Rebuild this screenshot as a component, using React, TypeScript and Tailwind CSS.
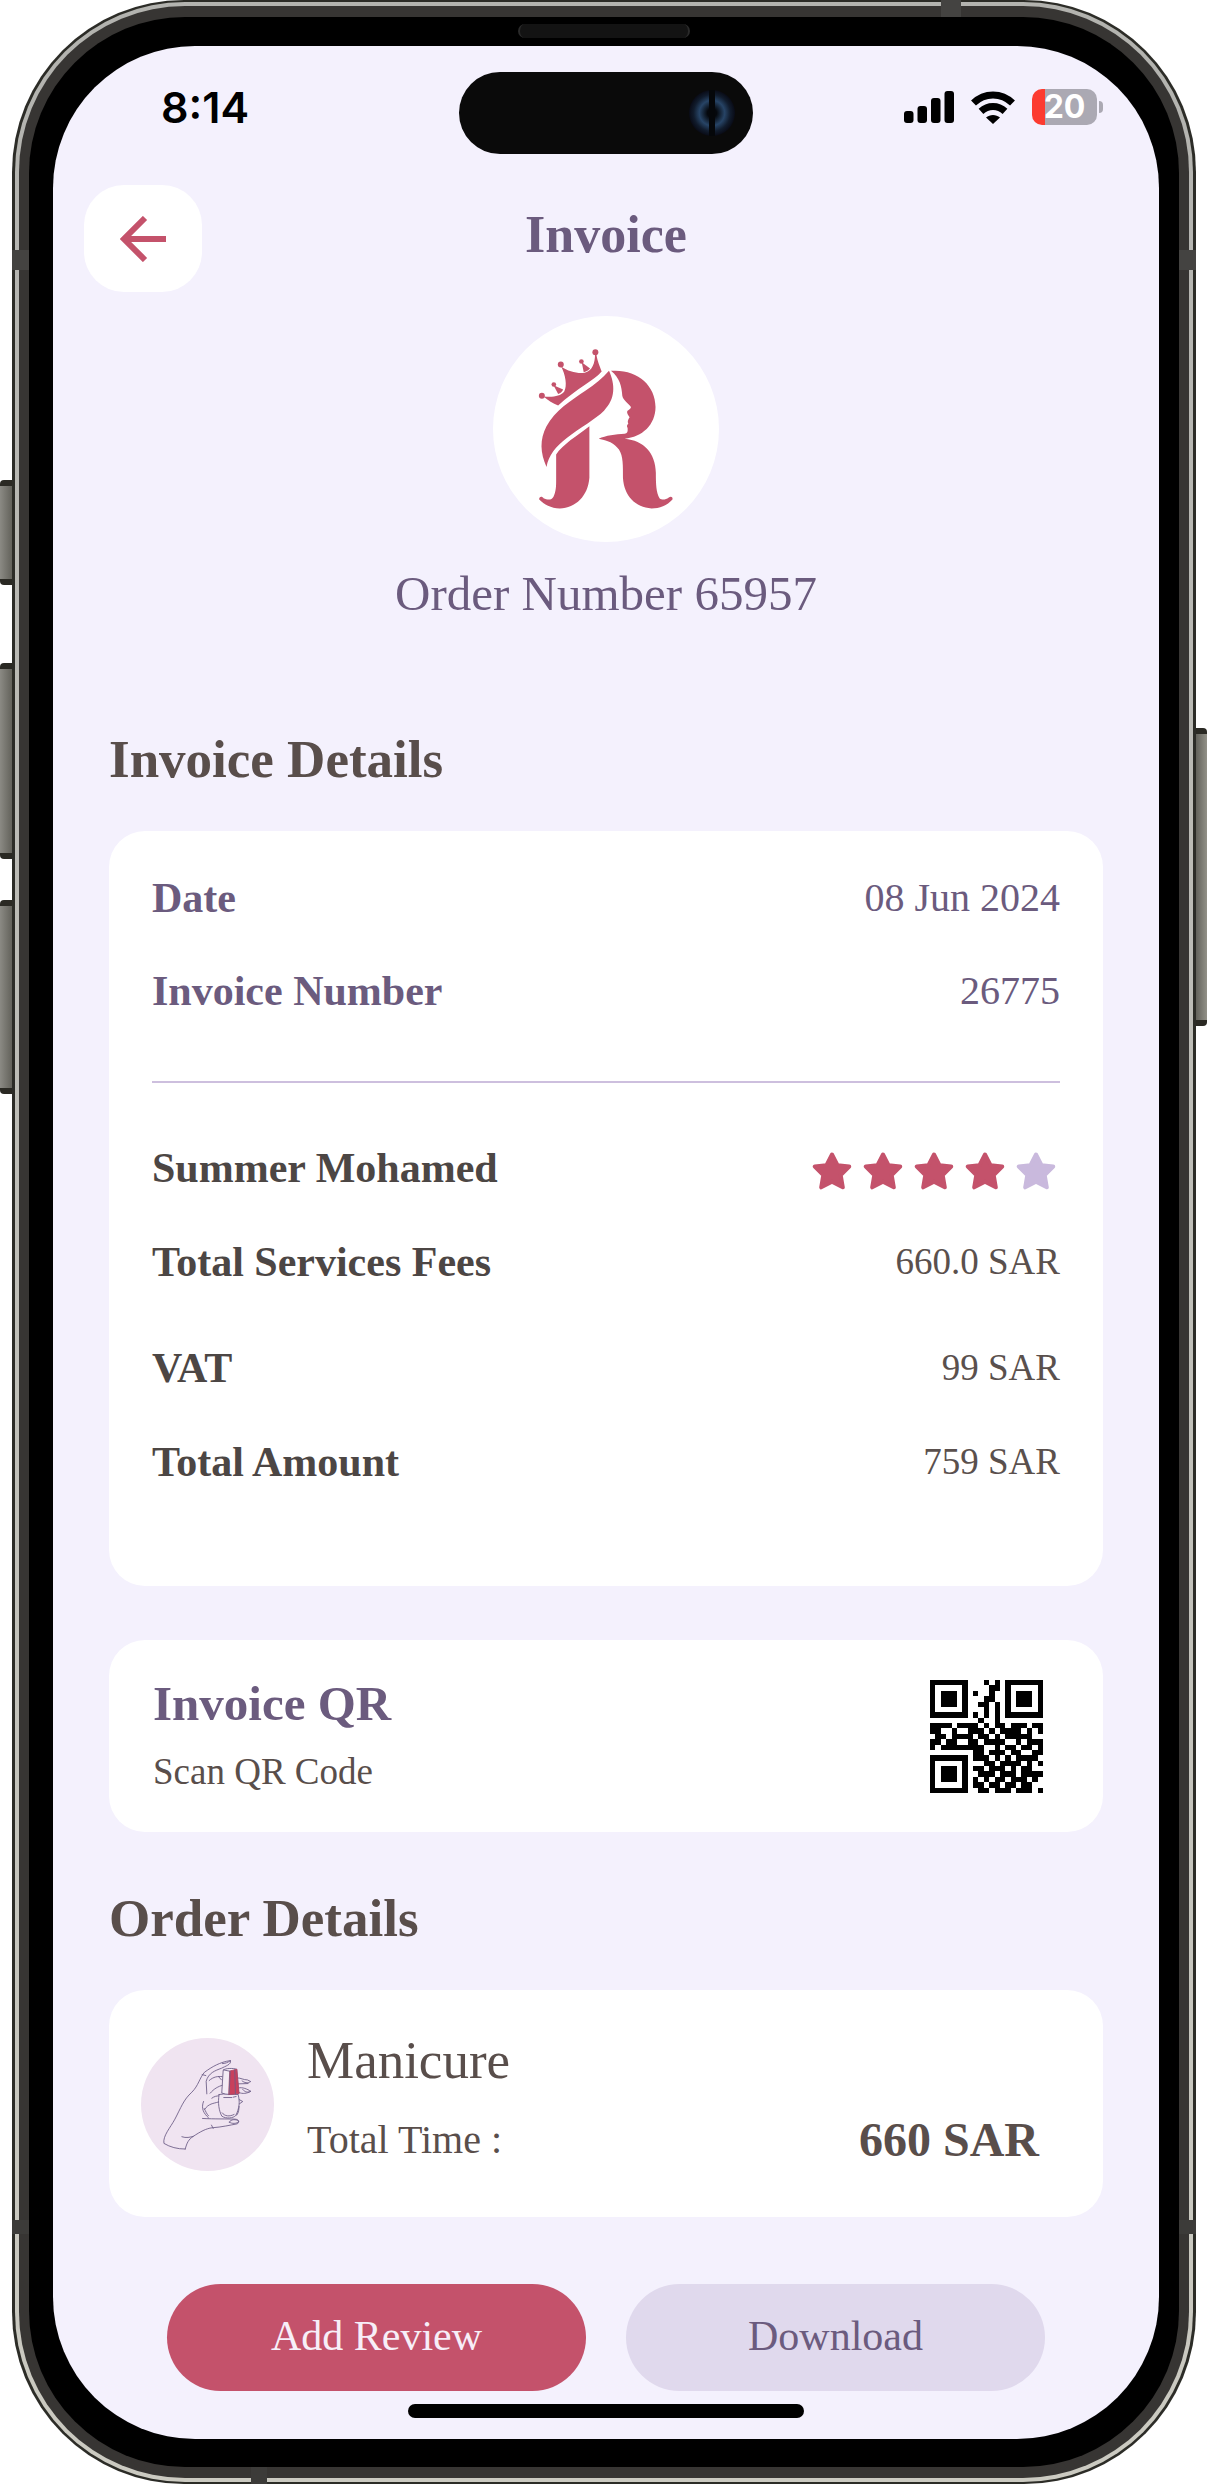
import React from "react";

const qrRows = [
  "111111100010101111111",
  "100000100001101000001",
  "101110101001001011101",
  "101110100011001011101",
  "101110100110101011101",
  "100000100010101000001",
  "111111101010101111111",
  "000000000100100000000",
  "111101111010110111011",
  "110010011101011110101",
  "011011110110101111100",
  "110110011011110010111",
  "101111111100101101101",
  "000000001101110110011",
  "111111101110101011110",
  "100000100011011110101",
  "101110101101110101100",
  "101110100111011101111",
  "101110101010110111010",
  "100000101101101101100",
  "111111100110111011101",
];

function QrCode() {
  return (
    <svg viewBox="0 0 21 21" className="size-[113px] shrink-0" shapeRendering="crispEdges" role="img" aria-label="Invoice QR code">
      {qrRows.flatMap((row, y) =>
        row.split("").map((cell, x) =>
          cell === "1" ? <rect key={`${x}-${y}`} x={x} y={y} width="1" height="1" fill="#000" /> : null,
        ),
      )}
    </svg>
  );
}

function Logo() {
  return (
    <svg viewBox="36 48 680 680" className="size-[226px] rounded-full bg-white" fill="#c4526b" role="img" aria-label="Salon logo">
      <circle cx="183" cy="288" r="9" />
      <circle cx="219" cy="254" r="7" />
      <circle cx="240" cy="194" r="9" />
      <circle cx="302" cy="185" r="7" />
      <circle cx="344" cy="157" r="9" />
      <path d="M218 256 L247 269 C244 276 240 280 232 283 Z" />
      <path d="M303 187 L328 206 C323 212 318 215 309 217 Z" />
      <path d="M188 290 C215 293 238 290 250 276 C260 258 254 225 241 200 C262 215 290 222 312 219 C335 212 343 190 343 162 L347 162 C350 185 358 200 363 215 C350 230 335 240 315 253 C285 274 258 292 232 317 C216 311 202 302 188 290Z" />
      <path d="M385 213 C365 237 342 254 315 272 C270 303 222 332 197 380 C176 420 178 460 197 502 C203 468 225 440 258 415 C298 384 345 358 370 333 C405 297 404 255 385 213Z" />
      <path d="M326 380 V535 C322 590 285 626 237 627 C210 626 190 615 175 600 C174 590 184 589 188 596 C200 602 212 603 218 592 C226 575 226 560 226 540 V465 C245 435 290 408 326 380Z" />
      <path d="M391 213 C468 207 525 255 525 322 C525 375 485 413 432 417 C490 422 525 460 526 520 C526 555 527 580 537 596 C545 603 555 601 565 594 C572 589 578 594 576 600 C560 618 537 627 513 627 C465 624 430 590 427 535 C427 500 428 470 415 450 C402 430 380 422 354 417 C375 407 405 404 432 402 C440 401 442 398 441 385 C437 378 440 375 443 372 C440 366 442 361 447 353 C442 345 438 340 440 334 C450 327 453 322 450 320 C440 308 428 302 425 288 C423 260 418 235 391 213Z" />
    </svg>
  );
}

function ManicureArt() {
  return (
    <svg
      viewBox="62 80 400 400"
      className="size-[133px] shrink-0 rounded-full bg-[#f0e4f1]"
      fill="none"
      stroke="#6b5b85"
      strokeWidth="2.6"
      strokeLinecap="round"
      strokeLinejoin="round"
      aria-hidden="true"
    >
      <path d="M195 414 C170 414 150 408 131 397 C127 375 150 350 164 324 C182 290 190 265 215 243 C235 223 238 200 253 183 C275 167 300 152 331 148 C334 160 315 165 304 171 C285 178 265 185 258 210 L260 248" />
      <path d="M195 414 C200 395 205 385 219 376 C240 362 258 352 276 350 C305 348 330 342 352 338 C360 330 355 325 345 324 C318 323 285 324 247 322" />
      <path d="M185 377 C198 382 210 378 219 376" />
      <path d="M274 342 L279 352 M246 190 L257 193 M307 157 C315 157 323 154 331 148" />
      <path d="M328 333 C330 324 350 323 356 331 C350 338 335 339 328 333Z" />
      <path d="M267 208 C280 196 293 195 306 196 M295 196 L304 206 M270 246 C282 232 294 226 307 222 M275 261 C283 255 290 254 297 254" />
      <path d="M250 271 C242 292 250 306 265 320 M254 294 C265 277 280 277 293 273 M252 292 C258 302 258 307 265 314" />
      <path d="M297 250 C292 275 297 300 305 315 C318 324 340 321 347 313 C358 292 360 270 354 250 C335 247 315 247 297 250Z" fill="#f0e4f1" />
      <path d="M311 259 H335 M339 258 L348 256 M306 305 C314 316 328 317 342 310" />
      <path d="M357 265 L368 271 L358 278 M350 312 C357 303 356 293 357 286" />
      <path d="M352 200 C362 200 370 206 382 206 L392 211 C383 217 373 215 366 209 M352 218 L384 217 M356 230 C367 227 382 234 392 240 C384 245 375 243 368 235 M357 244 C368 249 380 247 391 241" />
      <path d="M310 176 C315 171 338 170 350 174 L356 248 C340 251 320 251 306 246Z" fill="#f4ebf5" />
      <path d="M330 179 L350 174 L357 247 L327 250Z" fill="#c8405c" stroke="#b44463" />
      <path d="M310 176 L330 180 L327 250 M344 176 L346 248" />
    </svg>
  );
}

function Star({ filled }: { filled: boolean }) {
  return (
    <svg
      viewBox="0 0 40 38"
      className={filled ? "h-[38px] w-10 fill-[#c4526b] stroke-[#c4526b]" : "h-[38px] w-10 fill-[#c9b9dd] stroke-[#c9b9dd]"}
      strokeWidth="4"
      strokeLinejoin="round"
      aria-hidden="true"
    >
      <path d="M20 2.5 L25.5 13.2 L37.2 14.5 L28.7 23.2 L30.8 35.3 L20 29.7 L9.2 35.3 L11.3 23.2 L2.8 14.5 L14.5 13.2Z" />
    </svg>
  );
}

function StatusIcons() {
  return (
    <div className="flex h-[70px] items-center justify-end gap-[17px] pr-[56px]">
      <svg viewBox="0 0 50 32" className="h-8 w-[50px]" aria-label="Signal">
        <rect x="0" y="20" width="9.5" height="12" rx="3" />
        <rect x="13.5" y="15" width="9.5" height="17" rx="3" />
        <rect x="27" y="7" width="9.5" height="25" rx="3" />
        <rect x="40.5" y="0" width="9.5" height="32" rx="3" />
      </svg>
      <svg viewBox="0 0 44 33" className="h-[33px] w-11" fill="none" stroke="#000" strokeWidth="7" aria-label="Wi-Fi">
        <path d="M2.5 12 C13.5 1.2 30.5 1.2 41.5 12" />
        <path d="M10 20.4 C17 14 27 14 34 20.4" />
        <path d="M15 26.5 C19 23 25 23 29 26.5 L22 33Z" fill="#000" stroke="none" />
      </svg>
      <div className="flex items-center gap-[2px]">
        <div className="flex h-9 w-[65px] items-center justify-center rounded-[10px] bg-linear-to-r from-[#fc3b30] from-20% to-[#aba9b3] to-20% font-['Inter',sans-serif] text-[32px] leading-9 font-bold text-white">
          20
        </div>
        <div className="h-3 w-1 rounded-r-full bg-[#aba9b3]" />
      </div>
    </div>
  );
}

type RowProps = { label: string; children: React.ReactNode; tone?: "purple" | "dark" };

function Row({ label, children, tone = "dark" }: RowProps) {
  return (
    <div className={tone === "purple" ? "flex h-16 items-center justify-between text-[#6b5b7e]" : "flex h-16 items-center justify-between text-[#4c4644]"}>
      <dt className="text-[42px] leading-[64px] font-bold">{label}</dt>
      <dd className={tone === "purple" ? "text-[40px] leading-[64px]" : "text-[37px] leading-[64px] text-[#5a504d]"}>{children}</dd>
    </div>
  );
}

function DeviceDetails() {
  return (
    <div aria-hidden="true">
      <div className="absolute top-[480px] -left-3 h-[105px] w-3 rounded-l-[4px] border-y-[6px] border-[#2a2923] bg-linear-to-r from-[#8b8a84] to-[#63625b]" />
      <div className="absolute top-[663px] -left-3 h-[196px] w-3 rounded-l-[4px] border-y-[6px] border-[#2a2923] bg-linear-to-r from-[#8b8a84] to-[#63625b]" />
      <div className="absolute top-[900px] -left-3 h-[194px] w-3 rounded-l-[4px] border-y-[6px] border-[#2a2923] bg-linear-to-r from-[#8b8a84] to-[#63625b]" />
      <div className="absolute top-[728px] -right-[11px] h-[298px] w-[11px] rounded-r-[4px] border-y-[6px] border-[#2a2923] bg-linear-to-r from-[#63625b] to-[#929188]" />
      <div className="absolute top-[250px] left-0 h-5 w-[17px] bg-[#444341]" />
      <div className="absolute top-[250px] right-0 h-5 w-[17px] bg-[#444341]" />
      <div className="absolute bottom-[250px] left-0 h-[14px] w-[17px] bg-[#3c3b39]" />
      <div className="absolute right-0 bottom-[250px] h-[14px] w-[17px] bg-[#3c3b39]" />
      <div className="absolute top-0 right-[235px] h-[17px] w-5 bg-[#444341]" />
      <div className="absolute bottom-0 left-[239px] h-[17px] w-4 bg-[#3c3b39]" />
      <div className="absolute top-6 left-1/2 h-[14px] w-[172px] -translate-x-1/2 rounded-full border-x-2 border-[#2a2a2a] bg-[#131313]" />
    </div>
  );
}

export default function App() {
  return (
    <div className="bg-white pr-[11px] pl-3 font-['Liberation_Serif',serif]">
      <div className="relative">
        <div className="rounded-[172px] bg-[#2c2c27] px-[3px] py-[2px]">
          <div className="rounded-[170px] bg-linear-to-b from-[#b3b3af] to-[#cbcac1] p-1">
            <div className="rounded-[166px] bg-[#373533] px-[10px] py-[11px]">
              <div className="rounded-[156px] bg-black pt-[29px] pr-5 pb-7 pl-6">
                <main className="flex flex-col rounded-[142px] bg-[#f4f1fd] pt-[26px] pb-[21px]">
                  <div className="grid grid-cols-[1fr_294px_1fr] items-start">
                    <time className="pl-[108px] font-['Inter',sans-serif] text-[43px] leading-[70px] font-semibold text-black">8:14</time>
                    <div className="flex h-[82px] items-center justify-end rounded-full bg-[#0a0a0a] pr-[18px]">
                      <svg viewBox="0 0 46 46" className="size-[46px]" aria-hidden="true">
                        <defs>
                          <radialGradient id="lens">
                            <stop offset=".2" stopColor="#05080d" />
                            <stop offset=".55" stopColor="#274466" />
                            <stop offset=".8" stopColor="#111c2d" />
                            <stop offset="1" stopColor="#090b16" />
                          </radialGradient>
                        </defs>
                        <circle cx="23" cy="23" r="23" fill="url(#lens)" />
                        <rect x="20" y="0" width="6" height="46" fill="#05070a" />
                      </svg>
                    </div>
                    <StatusIcons />
                  </div>

                  <header className="mt-[31px] grid grid-cols-[1fr_auto_1fr] items-center">
                    <button aria-label="Back" className="ml-[31px] flex h-[107px] w-[118px] items-center justify-center rounded-[40px] bg-white">
                      <svg viewBox="0 0 46 46" className="size-[46px]" fill="none" stroke="#c4526b" strokeWidth="6" aria-hidden="true">
                        <path d="M25 2 L4 23 L25 44 M4 23 H46" />
                      </svg>
                    </button>
                    <h1 className="pb-2 text-[52px] leading-[72px] font-bold text-[#6b5b7e]">Invoice</h1>
                  </header>

                  <section className="mt-6 flex flex-col items-center">
                    <Logo />
                    <p className="mt-5 text-[49px] leading-[64px] text-[#6b5b7e]">Order Number 65957</p>
                  </section>

                  <div className="flex flex-col px-14">
                    <h2 className="mt-[101px] text-[53px] leading-[64px] font-bold text-[#594e4b]">Invoice Details</h2>
                    <section className="mt-10 rounded-[36px] bg-white px-[43px] pt-[35px] pb-[92px]">
                      <dl className="flex flex-col gap-[29px]">
                        <Row label="Date" tone="purple">08 Jun 2024</Row>
                        <Row label="Invoice Number" tone="purple">26775</Row>
                      </dl>
                      <hr className="mt-[58px] mb-[53px] border-t-2 border-[#cdbfde]" />
                      <dl className="flex flex-col gap-[30px]">
                        <Row label="Summer Mohamed">
                          <span className="flex gap-[11px] pt-[6px] pr-1" role="img" aria-label="4 out of 5 stars">
                            {[1, 2, 3, 4, 5].map((n) => (
                              <Star key={n} filled={n <= 4} />
                            ))}
                          </span>
                        </Row>
                        <Row label="Total Services Fees">660.0 SAR</Row>
                      </dl>
                      <dl className="mt-[42px] flex flex-col gap-[30px]">
                        <Row label="VAT">99 SAR</Row>
                        <Row label="Total Amount">759 SAR</Row>
                      </dl>
                    </section>

                    <section className="mt-[54px] flex items-center justify-between rounded-[36px] bg-white py-7 pr-[60px] pl-11">
                      <div className="pt-1 pb-2">
                        <h2 className="text-[49px] leading-[64px] font-bold text-[#6b5b7e]">Invoice QR</h2>
                        <p className="mt-3 text-[37px] leading-[48px] text-[#594e4b]">Scan QR Code</p>
                      </div>
                      <QrCode />
                    </section>

                    <h2 className="mt-[54px] text-[53px] leading-[64px] font-bold text-[#594e4b]">Order Details</h2>
                    <section className="mt-10 flex items-center rounded-[36px] bg-white pt-9 pr-16 pb-[35px] pl-8 text-[#594e4b]">
                      <ManicureArt />
                      <div className="ml-[33px] pt-[2px] pb-[18px]">
                        <h3 className="text-[53px] leading-[64px]">Manicure</h3>
                        <p className="mt-6 text-[40px] leading-[48px]">Total Time :</p>
                      </div>
                      <p className="mb-[10px] ml-auto self-end text-[48px] leading-[64px] font-bold">660 SAR</p>
                    </section>

                    <div className="mt-[67px] grid grid-cols-2 gap-10 px-[58px]">
                      <button className="h-[107px] rounded-full bg-[#c4526b] pb-1 text-[42px] leading-[64px] text-[#f7eef8]">Add Review</button>
                      <button className="h-[107px] rounded-full bg-[#e0d9ed] pb-1 text-[42px] leading-[64px] text-[#6b5b7e]">Download</button>
                    </div>
                  </div>
                  <div className="mt-[13px] h-[14px] w-[396px] self-center rounded-full bg-black" />
                </main>
              </div>
            </div>
          </div>
        </div>
        <DeviceDetails />
      </div>
    </div>
  );
}
